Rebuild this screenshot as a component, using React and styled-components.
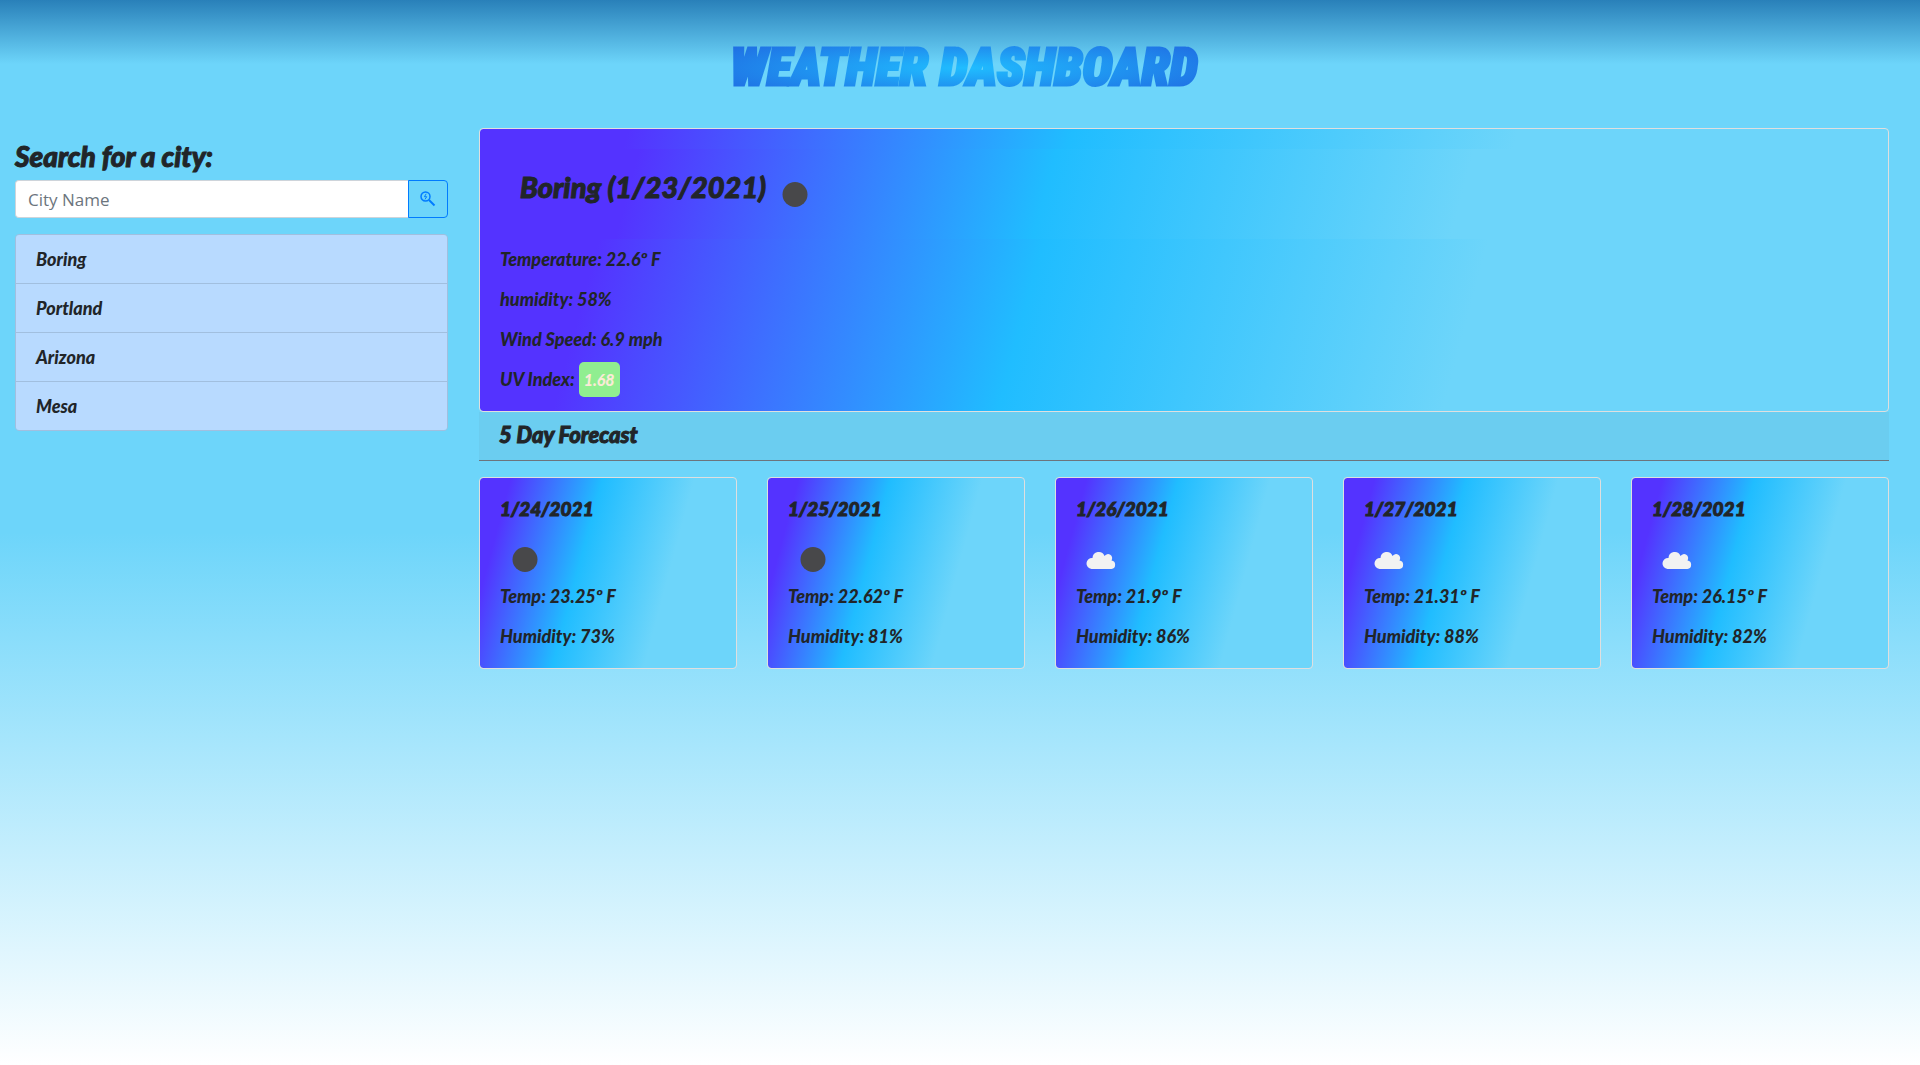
import React from 'react';
import styled, { createGlobalStyle } from 'styled-components';

const GlobalStyle = createGlobalStyle`
  *, *::before, *::after { box-sizing: border-box; }
  body {
    margin: 0;
    min-height: 100vh;
    color: #212529;
    font: italic 900 18px/24px Lato, "Open Sans", sans-serif;
    background: linear-gradient(#6dd5fa, #6dd5fa 50%, #ffffff) no-repeat;
  }
  h1, h2, h3, p, ul { margin: 0; padding: 0; }
`;

const skyGradient = 'linear-gradient(105deg, #5433ff 10%, #20bdff 40%, #6dd5fa 70%)';

const Header = styled.header`
  display: flex;
  justify-content: center;
  align-items: center;
  height: 128px;
  padding: 8px 0 0 8px;
  background: linear-gradient(#2980b9, #6dd5fa 50%);
`;

const Title = styled.h1`
  padding: 0 8px;
  font: italic 900 51px/60px "Roboto Condensed", "Open Sans Condensed", Lato, sans-serif;
  text-transform: uppercase;
  color: transparent;
  background: radial-gradient(#20bdff, #1f60de);
  background-clip: text;
  -webkit-text-stroke: 3px transparent;
`;

const Layout = styled.div`
  display: grid;
  grid-template-columns: minmax(0, 433fr) minmax(0, 1410fr);
  gap: 31px;
  padding: 0 31px 31px 15px;
`;

const Sidebar = styled.aside`
  padding-top: 12px;
`;

const SearchLabel = styled.label`
  display: block;
  margin-bottom: 8px;
  font-size: 28px;
  line-height: 32px;
  -webkit-text-stroke: 1px currentColor;
`;

const SearchForm = styled.form`
  margin-bottom: 16px;
`;

const SearchGroup = styled.div`
  display: flex;
`;

const SearchInput = styled.input`
  flex: 1;
  min-width: 0;
  height: 38px;
  padding: 6px 12px;
  border: 1px solid #ced4da;
  border-right: 0;
  border-radius: 4px 0 0 4px;
  background: #ffffff;
  color: #495057;
  font: 400 17px/24px "Open Sans", "Noto Sans", sans-serif;
  &::placeholder { color: #6c757d; opacity: 1; }
`;

const SearchButton = styled.button`
  display: flex;
  align-items: center;
  justify-content: center;
  width: 40px;
  height: 38px;
  padding: 0;
  border: 1px solid #007bff;
  border-radius: 0 4px 4px 0;
  background: transparent;
  color: #007bff;
  cursor: pointer;
`;

const CityList = styled.ul`
  list-style: none;
  overflow: hidden;
  border: 1px solid #a1bfdf;
  border-radius: 4px;
`;

const CityItem = styled.li`
  & + & { border-top: 1px solid #a1bfdf; }
`;

const CityButton = styled.button`
  display: block;
  width: 100%;
  padding: 12px 20px;
  border: 0;
  background: #b8daff;
  color: inherit;
  font: inherit;
  text-align: left;
  cursor: pointer;
`;

const Card = styled.article`
  padding: 20px;
  border: 1px solid #dfdfdf;
  border-radius: 4px;
  background: ${skyGradient} padding-box;
`;

const CurrentHeading = styled.div`
  display: flex;
  align-items: flex-start;
  gap: 4px;
  margin-bottom: 8px;
  padding: 20px;
  background: ${skyGradient};
`;

const CurrentTitle = styled.h2`
  font-size: 29px;
  font-weight: 900;
  line-height: 36px;
  -webkit-text-stroke: 1px currentColor;
`;

const Reading = styled.p`
  & + & { margin-top: 16px; }
`;

const UvBadge = styled.span`
  padding: 8px 5px;
  border-radius: 5px;
  background: #90ee90;
  color: #faebd7;
  font-size: 16px;
  line-height: 16px;
`;

const ForecastHeading = styled.h2`
  margin-bottom: 16px;
  padding: 11px 20px 13px;
  border-bottom: 1px solid #6c757d;
  background: rgba(90, 110, 130, 0.08);
  font-size: 22px;
  font-weight: 900;
  line-height: 24px;
  -webkit-text-stroke: 1px currentColor;
`;

const ForecastGrid = styled.div`
  display: grid;
  grid-template-columns: repeat(5, minmax(0, 1fr));
  gap: 30px;
`;

const DayTitle = styled.h3`
  margin-bottom: 14px;
  font-size: 19px;
  font-weight: 900;
  line-height: 22px;
  -webkit-text-stroke: 1px currentColor;
`;

const IconArt = styled.svg`
  display: block;
  flex: none;
`;

function WeatherIcon({ kind }) {
  return (
    <IconArt width="50" height="50" viewBox="0 0 50 50" aria-hidden="true">
      {kind === 'clear' ? (
        <circle cx="25" cy="25.5" r="12.5" fill="#48484a" />
      ) : (
        <path
          fill="#f2f2f2"
          d="M15.5 35a5.5 5.5 0 0 1 1-11 6.2 6.2 0 0 1 12-2 4 4 0 0 1 7 4.5 4.3 4.3 0 0 1 0 8.5z"
        />
      )}
    </IconArt>
  );
}

function SearchIcon() {
  return (
    <svg width="16" height="16" viewBox="0 0 16 16" fill="none" stroke="currentColor" aria-hidden="true">
      <circle cx="5.5" cy="5.5" r="4.5" strokeWidth="1.5" />
      <path d="M9 9l5.5 5.5" strokeWidth="2" />
      <path d="M6.2 2.8L4.4 5.7h2.3L5 8.4" strokeWidth="1" />
    </svg>
  );
}

const cities = ['Boring', 'Portland', 'Arizona', 'Mesa'];

const forecast = [
  { date: '1/24/2021', kind: 'clear', temp: '23.25', humidity: 73 },
  { date: '1/25/2021', kind: 'clear', temp: '22.62', humidity: 81 },
  { date: '1/26/2021', kind: 'clouds', temp: '21.9', humidity: 86 },
  { date: '1/27/2021', kind: 'clouds', temp: '21.31', humidity: 88 },
  { date: '1/28/2021', kind: 'clouds', temp: '26.15', humidity: 82 },
];

export default function App() {
  return (
    <>
      <GlobalStyle />
      <Header>
        <Title>Weather Dashboard</Title>
      </Header>
      <Layout>
        <Sidebar>
          <SearchForm onSubmit={(event) => event.preventDefault()}>
            <SearchLabel htmlFor="city">Search for a city:</SearchLabel>
            <SearchGroup>
              <SearchInput id="city" type="text" placeholder="City Name" />
              <SearchButton type="submit" aria-label="Search">
                <SearchIcon />
              </SearchButton>
            </SearchGroup>
          </SearchForm>
          <CityList>
            {cities.map((city) => (
              <CityItem key={city}>
                <CityButton type="button">{city}</CityButton>
              </CityItem>
            ))}
          </CityList>
        </Sidebar>
        <main>
          <Card>
            <CurrentHeading>
              <CurrentTitle>Boring (1/23/2021)</CurrentTitle>
              <WeatherIcon kind="clear" />
            </CurrentHeading>
            <Reading>Temperature: 22.6º F</Reading>
            <Reading>humidity: 58%</Reading>
            <Reading>Wind Speed: 6.9 mph</Reading>
            <Reading>
              UV Index: <UvBadge>1.68</UvBadge>
            </Reading>
          </Card>
          <ForecastHeading>5 Day Forecast</ForecastHeading>
          <ForecastGrid>
            {forecast.map((day) => (
              <Card key={day.date}>
                <DayTitle>{day.date}</DayTitle>
                <WeatherIcon kind={day.kind} />
                <Reading>Temp: {day.temp}º F</Reading>
                <Reading>Humidity: {day.humidity}%</Reading>
              </Card>
            ))}
          </ForecastGrid>
        </main>
      </Layout>
    </>
  );
}
